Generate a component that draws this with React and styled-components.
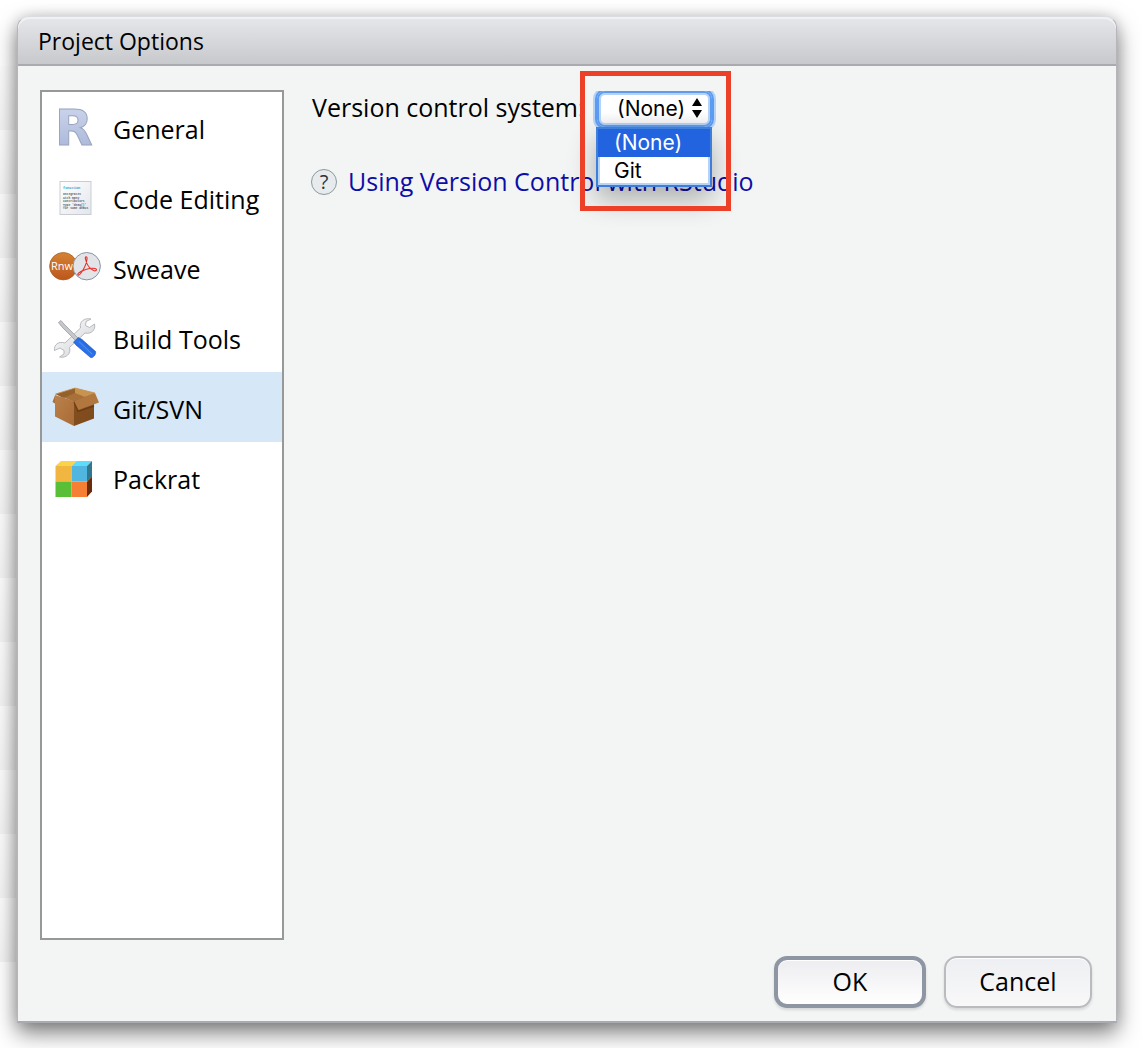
import React, { useState } from "react";
import styled, { createGlobalStyle } from "styled-components";

const GlobalStyle = createGlobalStyle`
  *, *::before, *::after { box-sizing: border-box; }
  body {
    margin: 0;
    background: #fff;
    color: #000;
    font-family: "Open Sans", "Noto Sans", sans-serif;
    font-size: 25px;
    line-height: 32px;
  }
  button, select { font: inherit; color: inherit; }
`;

const Page = styled.div`
  display: flex;
  min-height: 100vh;
  padding: 16px 25px 25px 17px;
  overflow: hidden;
  background: repeating-linear-gradient(#fdfdfd 0, #f4f4f4 64px) 0 66px / 16px calc(100% - 152px) no-repeat;
`;

const Dialog = styled.section`
  flex: 1;
  display: flex;
  flex-direction: column;
  border: 1px solid #b4b6bc;
  border-top-color: #dcdde1;
  border-bottom: 2px solid #a9abb0;
  border-radius: 12px 12px 0 0;
  background: #f3f5f4;
  box-shadow: 0 10px 22px rgba(0, 0, 0, 0.5), 0 0 14px rgba(0, 0, 0, 0.14);
`;

const TitleBar = styled.header`
  height: 49px;
  padding: 8px 20px;
  border-bottom: 2px solid #a9abb0;
  border-radius: 12px 12px 0 0;
  background: linear-gradient(#e6e7eb, #c8c9cd);
  box-shadow: inset 0 2px 0 #f0f1f3;
`;

const Title = styled.h1`
  margin: 0;
  font-size: 23px;
  line-height: 32px;
  font-weight: 400;
`;

const Body = styled.div`
  flex: 1;
  display: flex;
  gap: 28px;
  padding: 24px 22px 16px;
`;

const Sidebar = styled.nav`
  flex: 0 0 244px;
  border: 2px solid #979998;
  background: #fff;
`;

const NavItem = styled.button`
  display: flex;
  align-items: center;
  gap: 12px;
  width: 100%;
  height: 70px;
  padding: 4px 7px 0;
  border: 0;
  background: ${(p) => (p.$active ? "#d6e8f7" : "transparent")};
  text-align: left;
  white-space: nowrap;

  svg { margin-bottom: 4px; flex: none; overflow: visible; }
`;

const Content = styled.main`
  flex: 1;
  min-width: 0;
`;

const Field = styled.div`
  display: flex;
  align-items: flex-start;
  height: 36px;
`;

const FieldLabel = styled.label`
  flex: 0 0 285px;
  line-height: 34px;
  white-space: nowrap;
`;

const Picker = styled.div`
  position: relative;
  width: 115px;
  height: 36px;
`;

const Select = styled.select`
  appearance: none;
  width: 115px;
  height: 36px;
  padding: 0 4px 0 18px;
  border: 2px solid #5f9cf0;
  border-radius: 8px;
  outline: 0;
  background: linear-gradient(#fff 60%, #f1f1f3);
  box-shadow: inset 0 0 0 2px #b5d3f8, 0 0 0 2px #5a9cf3, 0 0 0 4px #b4d3f8;
  clip-path: inset(0 -6px -6px -6px);
  font-family: Inter, sans-serif;
  font-size: 21px;
`;

const Arrows = styled.svg`
  position: absolute;
  top: 8px;
  right: 9px;
  pointer-events: none;
`;

const Options = styled.ul`
  position: absolute;
  z-index: 1;
  top: 37px;
  left: -1px;
  width: 116px;
  margin: 0;
  padding: 0;
  border: 2px solid #3d7fda;
  background: #fff;
  box-shadow: 0 12px 28px rgba(0, 0, 0, 0.3);
  list-style: none;
  font-family: Inter, sans-serif;
  font-size: 21px;
  line-height: 28px;
`;

const Option = styled.li`
  padding: 0 16px;
  background: ${(p) => (p.$selected ? "#2263e0" : "#fff")};
  color: ${(p) => (p.$selected ? "#fff" : "#000")};
  box-shadow: ${(p) => (p.$selected ? "none" : "inset 2px -2px #b7d3f7, inset -2px 0 #b7d3f7")};
`;

const Highlight = styled.div`
  position: absolute;
  z-index: 2;
  top: -19px;
  left: -17px;
  width: 151px;
  height: 140px;
  border: 5px solid #ed4028;
  pointer-events: none;
`;

const HelpRow = styled.div`
  display: flex;
  align-items: center;
  gap: 11px;
  margin-top: 39px;
`;

const HelpBadge = styled.span`
  width: 26px;
  height: 26px;
  margin-left: -1px;
  border: 1px solid #8c999e;
  border-radius: 50%;
  background: #e7ebee;
  color: #26343b;
  font-size: 20px;
  line-height: 24px;
  text-align: center;
`;

const HelpLink = styled.a`
  padding-bottom: 2px;
  color: #0d0da8;
  text-decoration: none;
  white-space: nowrap;
`;

const Footer = styled.footer`
  display: flex;
  justify-content: flex-end;
  gap: 18px;
  padding: 0 24px 13px;
`;

const Action = styled.button`
  width: ${(p) => (p.$primary ? "152px" : "148px")};
  height: 52px;
  padding: 0 0 2px;
  border: ${(p) => (p.$primary ? "4px solid #8e96a4" : "2px solid #b9bbbf")};
  border-radius: 13px;
  background: ${(p) => (p.$primary ? "linear-gradient(#ededf1, #fff)" : "linear-gradient(#eeeff2, #f8f8f9)")};
  box-shadow: 0 2px 3px rgba(0, 0, 0, 0.12), inset 0 1px 1px #fff;
`;

const Glyph = ({ children }) => (
  <svg width="52" height="50" viewBox="0 0 52 50" aria-hidden="true">
    {children}
  </svg>
);

const GeneralIcon = () => (
  <Glyph>
    <defs>
      <linearGradient id="rFill" x1="0" y1="0" x2="0" y2="1">
        <stop offset="0.2" stopColor="#c8d1ea" />
        <stop offset="0.8" stopColor="#adbada" />
      </linearGradient>
    </defs>
    <text x="6" y="43" fontFamily="DejaVu Sans" fontWeight="700" fontSize="49" fill="url(#rFill)" stroke="#9aa6bd" strokeWidth="1">R</text>
  </Glyph>
);

const CodeIcon = () => (
  <Glyph>
    <defs>
      <linearGradient id="paper" x1="0" y1="0" x2="1" y2="1">
        <stop offset="0" stopColor="#fff" />
        <stop offset="1" stopColor="#e3e6eb" />
      </linearGradient>
    </defs>
    <rect x="11" y="9.5" width="31" height="33" fill="url(#paper)" stroke="#c9cdd3" />
    <g fontFamily="Liberation Mono" fontSize="3" fontWeight="700" fill="#565a68">
      <text x="14" y="16.5" fontSize="3.6" fill="#179fd6">function</text>
      <text x="14" y="23">Integrates</text>
      <text x="14" y="26.5">with many</text>
      <text x="14" y="30">contributors</text>
      <text x="14" y="33.5">Type 'demo()'</text>
      <text x="14" y="37">for some demos</text>
    </g>
  </Glyph>
);

const SweaveIcon = () => (
  <Glyph>
    <defs>
      <linearGradient id="rnw" x1="0" y1="0" x2="0" y2="1">
        <stop offset="0" stopColor="#d58332" />
        <stop offset="1" stopColor="#bd561c" />
      </linearGradient>
    </defs>
    <circle cx="14.3" cy="24.2" r="13.7" fill="url(#rnw)" stroke="#a8622b" strokeWidth="0.8" />
    <text x="2" y="28" fontFamily="Open Sans" fontSize="11" fill="#fff">Rnw</text>
    <circle cx="37.7" cy="24.2" r="13.7" fill="#e2e4e8" stroke="#8994a6" />
    <g fill="none" stroke="#ee2a24" strokeWidth="1.1" strokeLinejoin="round" strokeLinecap="round">
      <path d="M36.500 17C35.500 14 38.500 14 38 17C37.500 21 35 27 32 31C30 34 27.500 33.500 29.500 31.200C32 28.500 41 25.500 46 26.500C49 27.300 47 29.600 44.500 28.600C40.500 26.500 37.500 22 36.500 17Z" />
    </g>
  </Glyph>
);

const ToolsIcon = () => (
  <Glyph>
    <defs>
      <linearGradient id="steel" x1="0" y1="0" x2="1" y2="1">
        <stop offset="0" stopColor="#fff" />
        <stop offset="1" stopColor="#cfd1d4" />
      </linearGradient>
      <linearGradient id="handle" x1="0" y1="1" x2="1" y2="0">
        <stop offset="0" stopColor="#1557cf" />
        <stop offset="0.5" stopColor="#2e74ea" />
        <stop offset="1" stopColor="#134bb8" />
      </linearGradient>
    </defs>
    <path d="M42 7C35.500 5.500 30 9.500 31.500 16L16 31C10 29 4.500 32.500 5.500 38.500L11 36L15 38.500L15 42L10.500 45C17 46.500 22.500 41.500 20.500 35.500L36 21C42 22.500 47 18 45.500 12L40.500 15.500L36.500 13.500L37 9.500Z" fill="url(#steel)" stroke="#b0b2b5" strokeWidth="0.9" strokeLinejoin="round" />
    <path d="M9.500 10.500L12 8.500L15 12L29 26L26.500 28.500L12.500 14.500Z" fill="#c5c7cb" stroke="#9b9ea3" strokeWidth="0.8" />
    <path d="M24.500 30L29.500 25.500L33 27.500L46.500 39.500C47.500 42 44 46.500 41.500 45.500L27 33Z" fill="url(#handle)" stroke="#1550c0" strokeWidth="0.6" />
    <path d="M30 29.500L43 42" stroke="#5a97f8" strokeWidth="0.8" />
  </Glyph>
);

const BoxIcon = () => (
  <Glyph>
    <defs>
      <linearGradient id="boxLeft" x1="0" y1="0" x2="1" y2="1">
        <stop offset="0" stopColor="#bb814b" />
        <stop offset="1" stopColor="#a96b36" />
      </linearGradient>
      <linearGradient id="boxRight" x1="0" y1="0" x2="1" y2="1">
        <stop offset="0" stopColor="#85501f" />
        <stop offset="1" stopColor="#7d491c" />
      </linearGradient>
    </defs>
    <path d="M6 12L26 6L46 11L26 20Z" fill="#a8713a" />
    <path d="M7 12L26 6V11L14 16Z" fill="#94602c" />
    <path d="M26 6L46 11L36 15L26 11Z" fill="#c8924f" />
    <path d="M6 13L25 19V44L6 34.500Z" fill="url(#boxLeft)" />
    <path d="M25 19L45 12V36.500L25 44Z" fill="url(#boxRight)" />
    <path d="M6.500 12L3.500 20L6 21.500V14Z" fill="#a96f38" />
    <path d="M25 20L29 29.500L45 24" fill="none" stroke="#5c320f" strokeWidth="1.4" opacity="0.6" />
    <path d="M25 19L46 11L50 20.500L29.500 28Z" fill="#b1773f" />
    <path d="M6.500 12L26 6L46 11" fill="none" stroke="#cf9a5c" strokeWidth="0.8" />
  </Glyph>
);

const PackratIcon = () => (
  <Glyph>
    <path d="M6.500 14L12 9H27.500L22.500 14Z" fill="#fbd34a" />
    <path d="M22.500 14L27.500 9H43L38 14Z" fill="#5edbfb" />
    <path d="M6.500 14H22.500V29.500H6.500Z" fill="#f1b63f" />
    <path d="M22.500 14H38V29.500H22.500Z" fill="#50b6df" />
    <path d="M6.500 29.500H22.500V45H6.500Z" fill="#58bf37" />
    <path d="M22.500 29.500H38V45H22.500Z" fill="#f58033" />
    <path d="M38 14L43 9V24.500L38 29.500Z" fill="#31778f" />
    <path d="M38 29.500L43 24.500V39.500L38 45Z" fill="#6b2c0c" />
  </Glyph>
);

const sections = [
  ["General", GeneralIcon],
  ["Code Editing", CodeIcon],
  ["Sweave", SweaveIcon],
  ["Build Tools", ToolsIcon],
  ["Git/SVN", BoxIcon],
  ["Packrat", PackratIcon],
];

const systems = ["(None)", "Git"];

export default function App() {
  const [section, setSection] = useState("Git/SVN");
  const [system, setSystem] = useState("(None)");

  return (
    <>
      <GlobalStyle />
      <Page>
        <Dialog role="dialog" aria-labelledby="dialog-title">
          <TitleBar>
            <Title id="dialog-title">Project Options</Title>
          </TitleBar>
          <Body>
            <Sidebar aria-label="Sections">
              {sections.map(([name, Icon]) => (
                <NavItem key={name} type="button" $active={name === section} onClick={() => setSection(name)}>
                  <Icon />
                  {name}
                </NavItem>
              ))}
            </Sidebar>
            <Content>
              <Field>
                <FieldLabel htmlFor="vcs">Version control system:</FieldLabel>
                <Picker>
                  <Select id="vcs" value={system} onChange={(e) => setSystem(e.target.value)}>
                    {systems.map((s) => (
                      <option key={s}>{s}</option>
                    ))}
                  </Select>
                  <Arrows width="12" height="20" viewBox="0 0 12 20" aria-hidden="true">
                    <path d="M6 0L11 8H1ZM1 12H11L6 20Z" fill="#000" />
                  </Arrows>
                  <Options role="listbox" aria-label="Version control system">
                    {systems.map((s) => (
                      <Option key={s} role="option" aria-selected={s === system} $selected={s === system} onClick={() => setSystem(s)}>
                        {s}
                      </Option>
                    ))}
                  </Options>
                  <Highlight />
                </Picker>
              </Field>
              <HelpRow>
                <HelpBadge>?</HelpBadge>
                <HelpLink href="#version-control">Using Version Control with RStudio</HelpLink>
              </HelpRow>
            </Content>
          </Body>
          <Footer>
            <Action type="button" $primary>OK</Action>
            <Action type="button">Cancel</Action>
          </Footer>
        </Dialog>
      </Page>
    </>
  );
}
